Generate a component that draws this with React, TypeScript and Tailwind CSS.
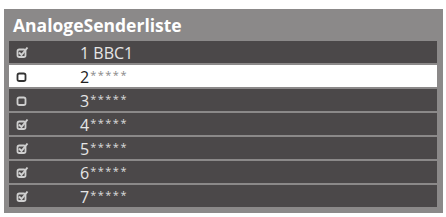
import React from "react";

type Channel = { no: string; name: string; checked: boolean; selected?: boolean };

const channels: Channel[] = [
  { no: "1", name: "BBC1", checked: true },
  { no: "2", name: "*****", checked: false, selected: true },
  { no: "3", name: "*****", checked: false },
  { no: "4", name: "*****", checked: true },
  { no: "5", name: "*****", checked: true },
  { no: "6", name: "*****", checked: true },
  { no: "7", name: "*****", checked: true },
];

function Box({ checked, dark }: { checked: boolean; dark: boolean }) {
  const c = dark ? "#333" : "#cfcfcf";
  return (
    <svg width="13" height="12" viewBox="0 0 13 12">
      <rect x="1.5" y="3.5" width="8" height="7.5" rx="1.8" fill="none" stroke={c} strokeWidth="1.8" />
      {checked && <path d="M3 6.5 L5.5 9 L11.5 1.5" fill="none" stroke={c} strokeWidth="2" />}
    </svg>
  );
}

function Row({ ch }: { ch: Channel }) {
  const isBBC = ch.name === "BBC1";
  return (
    <div
      className={
        "flex items-center h-[22px] " +
        (ch.selected ? "bg-white text-[#222]" : "bg-[#4b4849] text-[#e6e6e6]")
      }
    >
      <div className="w-[71px] pl-[7px] flex items-center">
        <Box checked={ch.checked} dark={!!ch.selected} />
      </div>
      <div className="flex items-start leading-none text-[16px] font-['Open_Sans',sans-serif] pt-[1px] whitespace-pre">
        {isBBC ? (
          <span>{ch.no + " " + ch.name}</span>
        ) : (
          <>
            <span>{ch.no}</span>
            <span
              className={
                "text-[11px] mt-[0px] ml-[1px] tracking-[1.5px] " +
                (ch.selected ? "text-[#888]" : "text-[#ddd]")
              }
            >
              {ch.name}
            </span>
          </>
        )}
      </div>
    </div>
  );
}

export default function App() {
  return (
    <div className="w-[446px] h-[217px] bg-white pt-[9px] pl-[4px]">
      <div className="w-[439px] h-[204px] bg-[#8b8989] flex flex-col">
        <div className="h-[32px] pl-[9px] flex items-center text-white font-bold text-[17.5px] font-['Open_Sans',sans-serif]">
          AnalogeSenderliste
        </div>
        <div className="flex flex-col gap-[2px] pl-[5px] pr-[6px]">
          {channels.map((ch) => (
            <Row key={ch.no} ch={ch} />
          ))}
        </div>
      </div>
    </div>
  );
}
